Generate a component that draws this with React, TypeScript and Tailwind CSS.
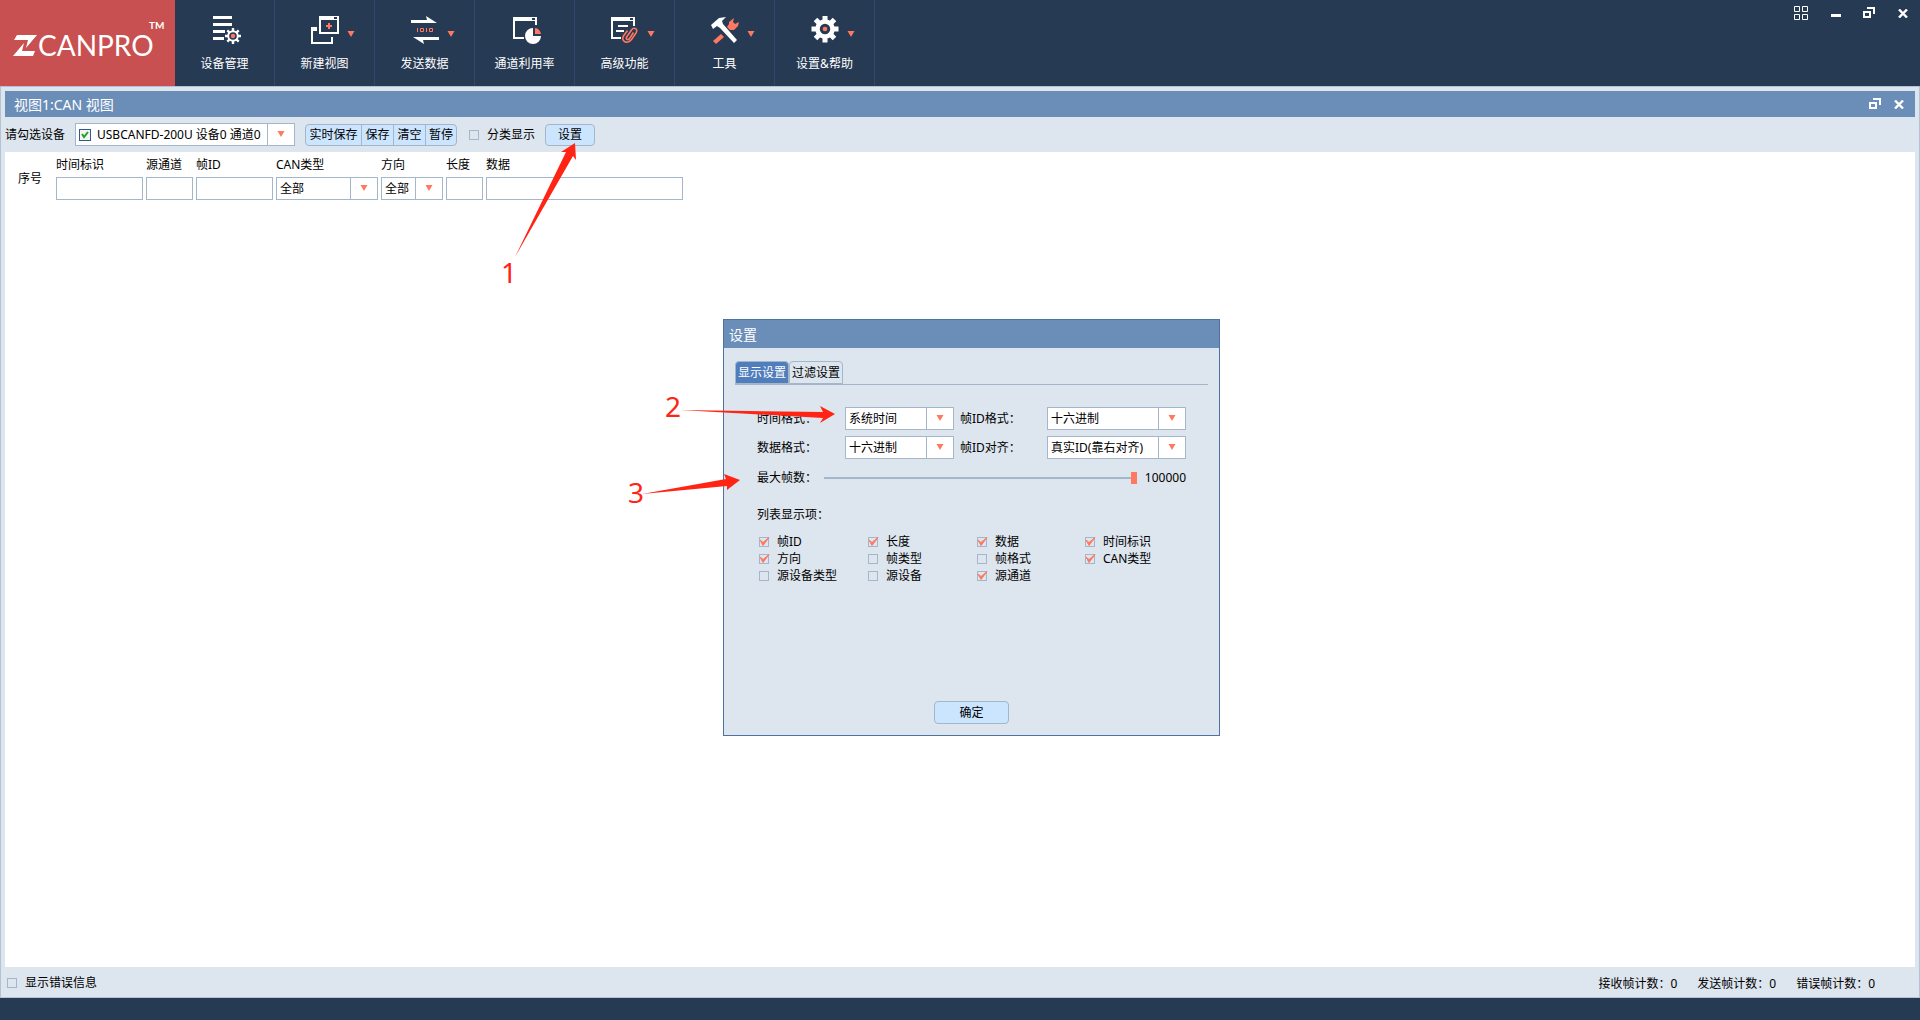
import type { ReactNode } from 'react'

type Tool = {
  label: string
  icon: ReactNode
  menu?: boolean
}

function Caret({ className = '' }: { className?: string }) {
  return (
    <svg width="8" height="6" viewBox="0 0 8 6" className={className} aria-hidden="true">
      <path d="M0.5 0H7.5L4 6Z" fill="#ff785f" />
    </svg>
  )
}

const DeviceIcon = (
  <svg width="28" height="28" viewBox="0 0 28 28" aria-hidden="true">
    <path d="M0 0H19V3H0ZM0 7H19V10H0ZM0 14H12V17H0ZM0 21H11V24H0Z" fill="#fff" />
    <circle cx="20" cy="20" r="4.8" fill="none" stroke="#fff" strokeWidth="2" />
    <path d="M20 12V15M20 25V28M12 20H15M25 20H28M14.3 14.3L16.5 16.5M23.5 23.5L25.7 25.7M25.7 14.3L23.5 16.5M16.5 23.5L14.3 25.7" stroke="#fff" strokeWidth="2.4" />
    <circle cx="20" cy="20" r="2.2" fill="#ff785f" />
  </svg>
)

const NewViewIcon = (
  <svg width="28" height="28" viewBox="0 0 28 28" aria-hidden="true">
    <path d="M8 0H28V18H8ZM10 4V16H26V4Z" fill="#fff" fillRule="evenodd" />
    <path d="M23 1H26V3H23Z" fill="#273a53" />
    <path d="M0 11H6V15H2V26H20V21H22V28H0Z" fill="#fff" />
    <path d="M17 7H19V9H21V11H19V13H17V11H15V9H17Z" fill="#ff785f" />
  </svg>
)

const SendIcon = (
  <svg width="28" height="28" viewBox="0 0 28 28" aria-hidden="true">
    <path d="M0 4H16L15 0L26 7H0ZM28 24H12L13 28L2 21H28Z" fill="#fff" />
    <path d="M6.5 12V16M15.5 12V16M9.5 12.5H12.5V15.5H9.5ZM18.5 12.5H21.5V15.5H18.5Z" fill="none" stroke="#ff785f" />
  </svg>
)

const UsageIcon = (
  <svg width="28" height="28" viewBox="0 0 28 28" aria-hidden="true">
    <path d="M0 1H24V9H22V5H2V21H11V23H0Z" fill="#fff" />
    <path d="M19 2H22V4H19Z" fill="#273a53" />
    <path d="M20 12V20H28A8 8 0 1 1 20 12Z" fill="#fff" />
    <path d="M22 12A6.5 6.5 0 0 1 28 18H22Z" fill="#ff785f" />
  </svg>
)

const AdvancedIcon = (
  <svg width="28" height="28" viewBox="0 0 28 28" aria-hidden="true">
    <path d="M0 1H24V10H22V5H2V21H10V23H0Z" fill="#fff" />
    <path d="M19 2H22V4H19Z" fill="#273a53" />
    <path d="M7 9H17V11H7ZM5 14H13V16H5Z" fill="#fff" />
    <path d="M22.5 16.5L18.5 22.5C16.8 25 14.3 23 15.8 20.8L20.5 14C23 10.5 27.5 13 25 17L20.5 23.5C16.5 29 9.5 25 12.5 20L16.5 14.5" fill="none" stroke="#ff785f" strokeWidth="1.6" />
  </svg>
)

const ToolsIcon = (
  <svg width="28" height="28" viewBox="0 0 28 28" aria-hidden="true">
    <path d="M10 18L13 21L5 28L2 25Z" fill="#ff785f" />
    <path d="M16 11L18 8L18 6L23 2L22 6L24 8L28 6L27 10L23 14L19 14Z" fill="#ff785f" />
    <path d="M0 9L8 2L15 1L11 5L12 8L26 24L23 27L9 12L6 10L2 13Z" fill="#fff" />
  </svg>
)

const GearIcon = (
  <svg width="28" height="28" viewBox="0 0 28 28" aria-hidden="true">
    <circle cx="14" cy="13" r="7.5" fill="none" stroke="#fff" strokeWidth="4.5" />
    <path d="M14 -0.5V5M14 21V26.5M0.5 13H6M22 13H27.5M4.5 3.5L8 7M20 19L23.5 22.5M23.5 3.5L20 7M8 19L4.5 22.5" stroke="#fff" strokeWidth="5" />
    <circle cx="14" cy="13" r="2.3" fill="#ff785f" />
  </svg>
)

const tools: Tool[] = [
  { label: '设备管理', icon: DeviceIcon },
  { label: '新建视图', icon: NewViewIcon, menu: true },
  { label: '发送数据', icon: SendIcon, menu: true },
  { label: '通道利用率', icon: UsageIcon },
  { label: '高级功能', icon: AdvancedIcon, menu: true },
  { label: '工具', icon: ToolsIcon, menu: true },
  { label: '设置&帮助', icon: GearIcon, menu: true },
]

const displayItems = [
  { label: '帧ID', checked: true },
  { label: '长度', checked: true },
  { label: '数据', checked: true },
  { label: '时间标识', checked: true },
  { label: '方向', checked: true },
  { label: '帧类型', checked: false },
  { label: '帧格式', checked: false },
  { label: 'CAN类型', checked: true },
  { label: '源设备类型', checked: false },
  { label: '源设备', checked: false },
  { label: '源通道', checked: true },
]

function Select({ id, value }: { id: string; value: string }) {
  return (
    <span className="grid h-[23px] w-full border border-[#a4b6ca] bg-white">
      <select id={id} className="[grid-area:1/1] w-full min-w-0 appearance-none bg-transparent pl-[3px] pr-7 outline-none">
        <option>{value}</option>
      </select>
      <span className="[grid-area:1/1] flex w-[27px] items-center justify-center justify-self-end border-l border-[#a4b6ca] bg-white pb-px pointer-events-none">
        <Caret />
      </span>
    </span>
  )
}

function CheckBox({ label, checked = false }: { label: string; checked?: boolean }) {
  return (
    <label className="flex items-center gap-2 whitespace-nowrap">
      <span className="grid size-[10px]">
        <input type="checkbox" defaultChecked={checked} className="peer [grid-area:1/1] size-[10px] appearance-none border border-[#a4b6ca]" />
        <svg viewBox="0 0 10 10" className="[grid-area:1/1] hidden size-[10px] overflow-visible pointer-events-none peer-checked:block" aria-hidden="true">
          <path d="M1 3L4 8.5L10 0.5L4 5.5Z" fill="#ff785f" stroke="#ff785f" />
        </svg>
      </span>
      {label}
    </label>
  )
}

function RestoreIcon() {
  return (
    <svg width="13" height="12" viewBox="0 0 13 12" aria-hidden="true">
      <path d="M1 5H7V10H1Z" fill="none" stroke="#fff" strokeWidth="2" />
      <path d="M4 0H12V7H10V2H4Z" fill="#fff" />
    </svg>
  )
}

function CloseIcon() {
  return (
    <svg width="10" height="9" viewBox="0 0 10 9" aria-hidden="true">
      <path d="M1 0.5L9 8.5M9 0.5L1 8.5" stroke="#fff" strokeWidth="2.4" />
    </svg>
  )
}

function Header() {
  return (
    <header className="flex h-[86px] text-white">
      <div className="flex w-[175px] items-center bg-[#c85050] pl-[13px] pt-1">
        <svg width="24" height="21" viewBox="0 0 24 21" aria-hidden="true">
          <path d="M4 0H24L13 13L15 5H1ZM0 21L11 8L9 16H22L20 21Z" fill="#fff" />
        </svg>
        <span className="w-[112px] pl-px font-[Lato,sans-serif] text-[28px] leading-7">CANPRO</span>
        <span className="self-start pt-[15px] font-[Lato,sans-serif] text-[10px] font-bold">TM</span>
      </div>
      <nav className="flex flex-1">
        {tools.map((tool) => (
          <button key={tool.label} className="flex w-[100px] flex-col items-center border-r border-[#2f4a6b] pt-4">
            <span className={tool.menu ? 'grid grid-cols-[8px_28px_8px] items-center gap-2' : 'flex pl-1'}>
              {tool.menu && <span />}
              {tool.icon}
              {tool.menu && <Caret className="mt-2" />}
            </span>
            <span className="pt-[11px] leading-[18px]">{tool.label}</span>
          </button>
        ))}
      </nav>
      <div className="flex h-[26px] items-center gap-[22px] pr-3">
        <button aria-label="布局">
          <svg width="15" height="14" viewBox="0 0 15 14" aria-hidden="true">
            <path d="M0.500 0.500H5.500V5.500H0.500ZM8.500 0.500H13.500V5.500H8.500ZM0.500 8.500H5.500V13.500H0.500ZM8.500 8.500H13.500V13.500H8.500Z" fill="none" stroke="#fff" />
          </svg>
        </button>
        <button aria-label="最小化" className="mt-1 h-[3px] w-[10px] bg-white" />
        <button aria-label="还原"><RestoreIcon /></button>
        <button aria-label="关闭"><CloseIcon /></button>
      </div>
    </header>
  )
}

function Toolbar() {
  return (
    <div className="flex h-[35px] items-center">
      <label htmlFor="device" className="w-[70px]">请勾选设备</label>
      <span className="flex h-[23px] w-[220px] items-center border border-[#a4b6ca] bg-white">
        <span className="ml-[3px] grid size-[12px] shrink-0">
          <input type="checkbox" defaultChecked aria-label="通道0" className="[grid-area:1/1] size-[12px] appearance-none border border-[#2f5c8f] bg-[#f4f4f4]" />
          <svg viewBox="0 0 12 12" className="[grid-area:1/1] size-[12px] pointer-events-none" aria-hidden="true">
            <path d="M3 5L5 8L9 3" fill="none" stroke="#22a022" strokeWidth="2" />
          </svg>
        </span>
        <select id="device" className="ml-1.5 w-[170px] appearance-none overflow-hidden bg-transparent outline-none">
          <option>USBCANFD-200U 设备0 通道0</option>
        </select>
        <span className="flex w-[27px] shrink-0 items-center justify-center self-stretch border-l border-[#a4b6ca] pb-px">
          <Caret />
        </span>
      </span>
      <div className="ml-2.5 flex h-[22px] divide-x divide-[#a4b6ca] rounded border border-[#a4b6ca] bg-[#cce5ff]">
        <button className="w-[56px]">实时保存</button>
        <button className="w-8">保存</button>
        <button className="w-8">清空</button>
        <button className="w-[30px]">暂停</button>
      </div>
      <div className="ml-3 w-[76px]">
        <CheckBox label="分类显示" />
      </div>
      <button className="h-[22px] w-[50px] rounded border border-[#a4b6ca] bg-[#cce5ff]">设置</button>
    </div>
  )
}

function Filters() {
  const box = 'mt-1 h-[23px] w-full border border-[#a4b6ca] bg-white outline-none'

  return (
    <div className="flex items-center pl-[13px] pt-[5px]">
      <span className="w-[38px]">序号</span>
      <div className="flex gap-[3px]">
        <label className="w-[87px] leading-4">时间标识<input className={box} /></label>
        <label className="w-[47px] leading-4">源通道<input className={box} /></label>
        <label className="w-[77px] leading-4">帧ID<input className={box} /></label>
        <div className="flex w-[102px] flex-col gap-1 leading-4">
          <label htmlFor="can-type">CAN类型</label>
          <Select id="can-type" value="全部" />
        </div>
        <div className="flex w-[62px] flex-col gap-1 leading-4">
          <label htmlFor="direction">方向</label>
          <Select id="direction" value="全部" />
        </div>
        <label className="w-[37px] leading-4">长度<input className={box} /></label>
        <label className="w-[197px] leading-4">数据<input className={box} /></label>
      </div>
    </div>
  )
}

function SettingsDialog() {
  return (
    <section role="dialog" aria-label="设置" className="absolute left-[723px] top-[319px] flex h-[417px] w-[497px] flex-col border border-[#4e73a3] bg-[#dde5ee]">
      <h2 className="flex h-7 items-center bg-[#6b8eb8] pl-[5px] pt-0.5 text-sm text-white">设置</h2>
      <div className="mx-[11px] mt-[13px] flex h-6 border-b border-[#a4b6ca]">
        <button className="w-[54px] rounded-t border border-[#a4b6ca] bg-[#507dbc] text-white">显示设置</button>
        <button className="w-[54px] rounded-t border border-[#a4b6ca]">过滤设置</button>
      </div>
      <div className="ml-[33px] mt-[22px] grid grid-cols-[88px_109px_6px_87px_139px] items-center gap-y-1.5">
        <label htmlFor="time-format">时间格式：</label>
        <Select id="time-format" value="系统时间" />
        <span />
        <label htmlFor="id-format">帧ID格式：</label>
        <Select id="id-format" value="十六进制" />
        <label htmlFor="data-format">数据格式：</label>
        <Select id="data-format" value="十六进制" />
        <span />
        <label htmlFor="id-align">帧ID对齐：</label>
        <Select id="id-align" value="真实ID(靠右对齐)" />
      </div>
      <div className="ml-[33px] mt-2 flex h-[21px] w-[429px] items-center">
        <label htmlFor="max-frames" className="w-[67px] pt-px">最大帧数：</label>
        <input
          id="max-frames"
          type="range"
          min="0"
          max="100000"
          defaultValue="100000"
          className="h-3 w-[313px] appearance-none bg-[linear-gradient(#a4b6ca,#a4b6ca)] bg-[length:100%_2px] bg-center bg-no-repeat [&::-webkit-slider-thumb]:h-3 [&::-webkit-slider-thumb]:w-1.5 [&::-webkit-slider-thumb]:appearance-none [&::-webkit-slider-thumb]:bg-[#ff785f]"
        />
        <output htmlFor="max-frames" className="flex-1 pt-px text-right">100000</output>
      </div>
      <fieldset className="ml-[33px] mt-[17px]">
        <legend className="leading-5">列表显示项：</legend>
        <div className="ml-0.5 mt-2 grid auto-rows-[17px] grid-cols-[109px_109px_108px_100px] items-center">
          {displayItems.map((item) => (
            <CheckBox key={item.label} label={item.label} checked={item.checked} />
          ))}
        </div>
      </fieldset>
      <button className="mb-[11px] mt-auto h-[23px] w-[75px] self-center rounded border border-[#a4b6ca] bg-[#cce5ff]">确定</button>
    </section>
  )
}

// numbered steps drawn over the window
function GuideArrows() {
  return (
    <div className="absolute left-[500px] top-[140px] h-[370px] w-[350px] text-[28px] leading-8 text-[#ff2414] pointer-events-none">
      <svg width="350" height="370" viewBox="0 0 350 370" fill="#ff2414" aria-hidden="true">
        <path d="M15 117L66 12L61 12L75 3L76 20L73 16L15 117Z" />
        <path d="M180 270L323 272L320 266L335 274L320 283L323 278Z" />
        <path d="M142 354L226 339L224 334L240 340L227 350L227 346Z" />
      </svg>
      <span className="absolute left-px top-[116px]">1</span>
      <span className="absolute left-[165px] top-[250px]">2</span>
      <span className="absolute left-[128px] top-[336px]">3</span>
    </div>
  )
}

export default function App() {
  return (
    <div className="relative flex min-h-screen flex-col bg-[#273a53] font-['Noto_Sans','Noto_Sans_CJK_SC',sans-serif] text-xs text-black">
      <Header />
      <main className="flex flex-1 flex-col border border-[#b3c3d3] bg-[#dde5ee] px-1 pt-1">
        <div className="flex h-[26px] items-center bg-[#6b8eb8] pl-[9px] pr-[11px] text-white">
          <h1 className="flex-1 pt-0.5 text-sm">视图1:CAN 视图</h1>
          <div className="flex items-center gap-3">
            <button aria-label="还原视图"><RestoreIcon /></button>
            <button aria-label="关闭视图"><CloseIcon /></button>
          </div>
        </div>
        <Toolbar />
        <div className="flex-1 bg-white">
          <Filters />
        </div>
        <div className="flex h-[30px] items-center gap-5 pl-0.5 pr-10 pt-0.5">
          <div className="flex-1">
            <CheckBox label="显示错误信息" />
          </div>
          <div className="flex gap-5 pt-0.5">
            <span>接收帧计数：0</span>
            <span>发送帧计数：0</span>
            <span>错误帧计数：0</span>
          </div>
        </div>
      </main>
      <footer className="h-[22px]" />
      <SettingsDialog />
      <GuideArrows />
    </div>
  )
}
